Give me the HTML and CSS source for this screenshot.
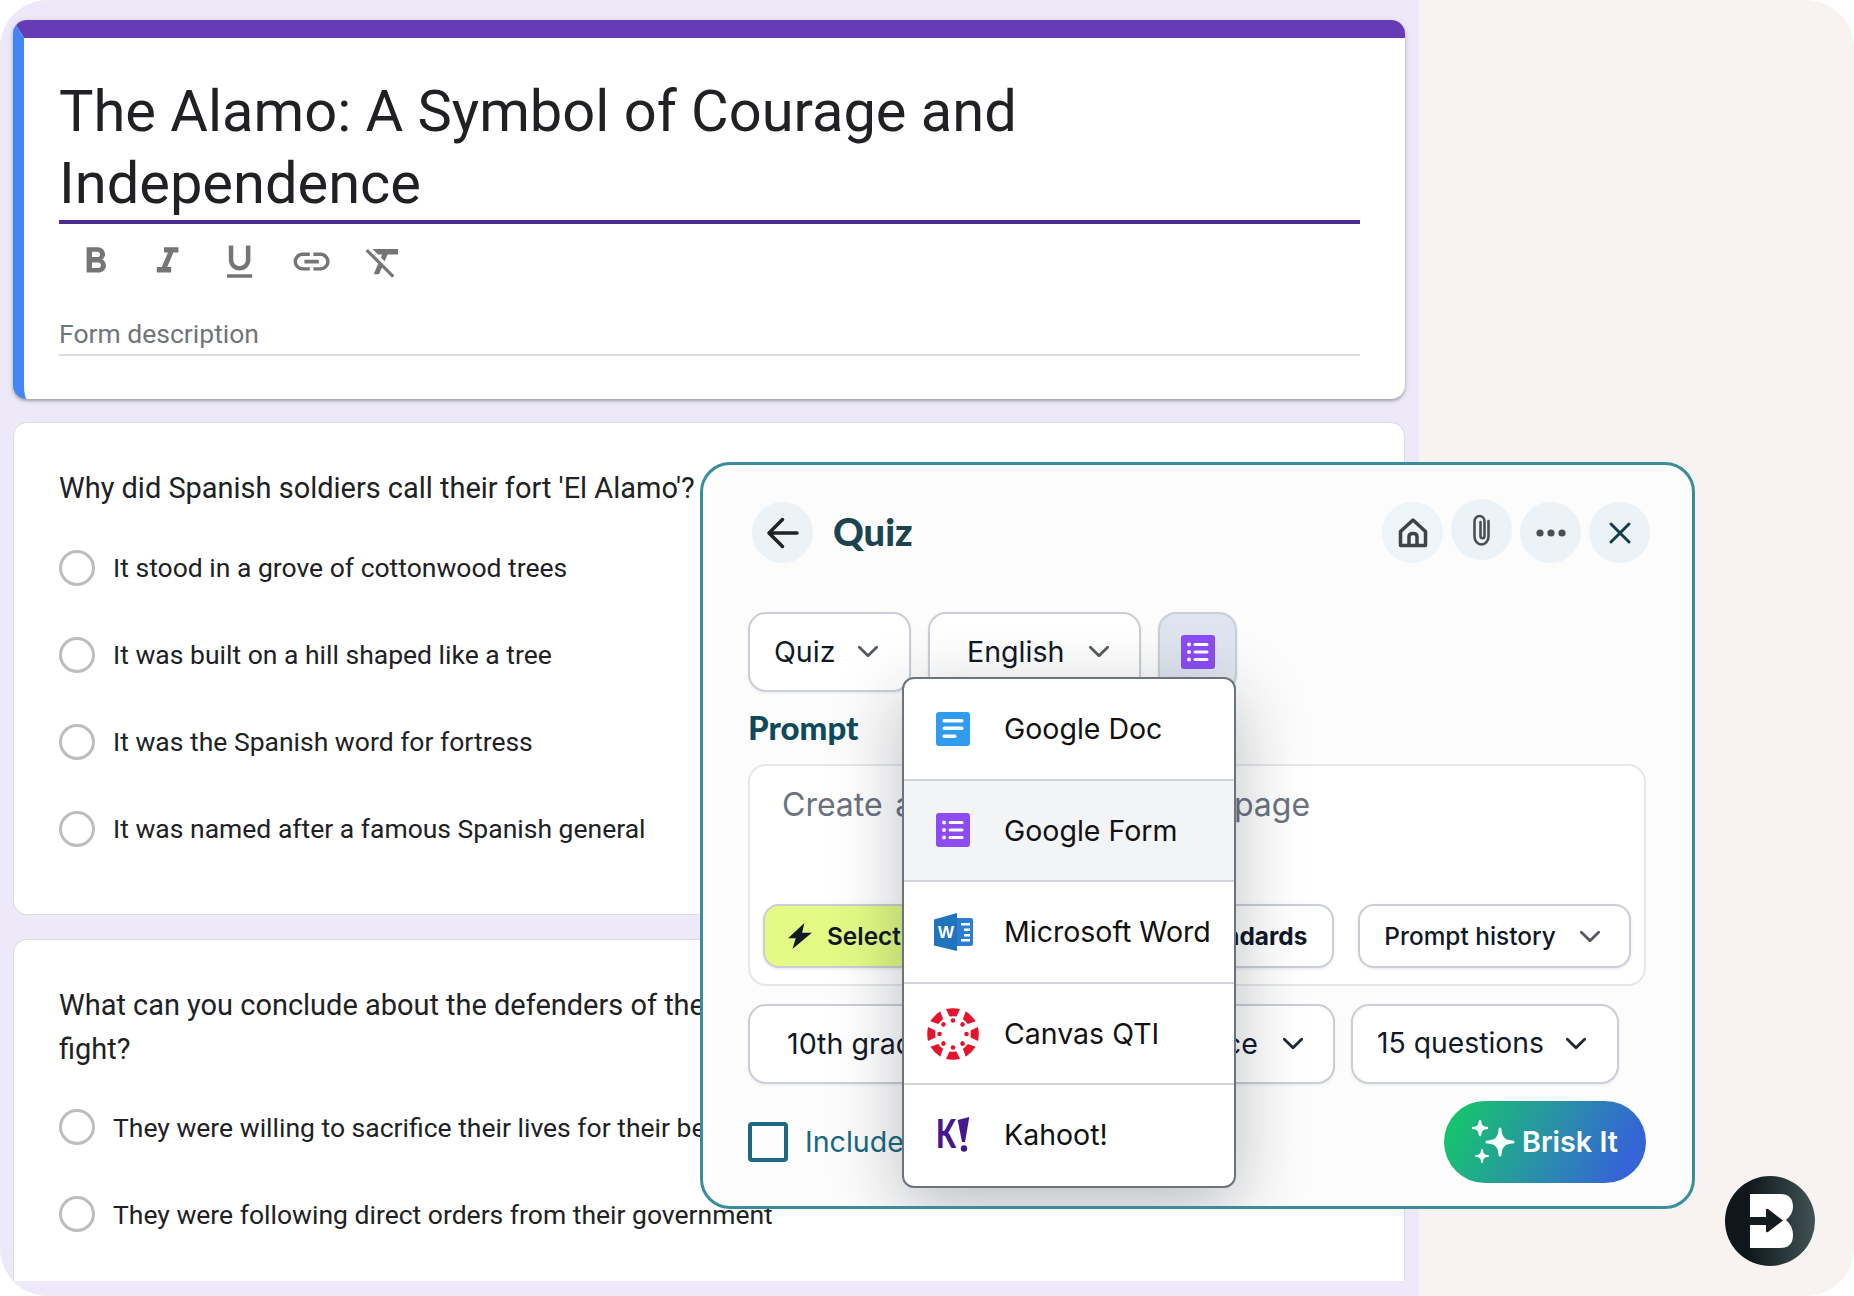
FILE: index.html
```html
<!DOCTYPE html>
<html lang="en">
<head>
<meta charset="utf-8">
<title>The Alamo quiz</title>
<link rel="stylesheet" href="styles.css">
</head>
<body>
<div class="page">
  <main class="forms">
    <section class="card title-card">
      <div class="title-inner">
        <h1 class="form-title">The Alamo: A Symbol of Courage and Independence</h1>
        <div class="toolbar">
          <svg class="tool" viewBox="0 0 24 24"><path d="M15.6 10.79c.97-.67 1.65-1.77 1.65-2.79 0-2.26-1.75-4-4-4H7v14h7.04c2.09 0 3.71-1.7 3.71-3.79 0-1.52-.86-2.82-2.15-3.42zM10 6.5h3c.83 0 1.5.67 1.5 1.5s-.67 1.5-1.5 1.5h-3v-3zm3.5 9H10v-3h3.5c.83 0 1.5.67 1.5 1.5s-.67 1.5-1.5 1.5z"/></svg>
          <svg class="tool" viewBox="0 0 24 24"><path d="M10 4v3h2.21l-3.42 8H6v3h8v-3h-2.21l3.42-8H18V4z"/></svg>
          <svg class="tool" viewBox="0 0 24 24"><path d="M12 17c3.31 0 6-2.69 6-6V3h-2.5v8c0 1.93-1.57 3.5-3.5 3.5S8.5 12.93 8.5 11V3H6v8c0 3.31 2.69 6 6 6zm-7 2v2h14v-2H5z"/></svg>
          <svg class="tool" viewBox="0 0 24 24"><path d="M3.9 12c0-1.71 1.39-3.1 3.1-3.1h4V7H7c-2.76 0-5 2.24-5 5s2.24 5 5 5h4v-1.9H7c-1.71 0-3.1-1.39-3.1-3.1zM8 13h8v-2H8v2zm9-6h-4v1.9h4c1.71 0 3.1 1.39 3.1 3.1s-1.39 3.1-3.1 3.1h-4V17h4c2.76 0 5-2.24 5-5s-2.24-5-5-5z"/></svg>
          <svg class="tool" viewBox="0 0 24 24"><path d="M3.27 5L2 6.27l6.97 6.97L6.5 19h3l1.57-3.66L16.73 21 18 19.73 3.55 5.27 3.27 5zM6 5v.18L8.82 8h2.4l-.72 1.68 2.1 2.1L14.21 8H20V5H6z"/></svg>
        </div>
        <div class="form-desc">Form description</div>
      </div>
    </section>

    <section class="card question q1">
      <p class="q-text">Why did Spanish soldiers call their fort 'El Alamo'?</p>
      <div class="option"><span class="radio"></span>It stood in a grove of cottonwood trees</div>
      <div class="option"><span class="radio"></span>It was built on a hill shaped like a tree</div>
      <div class="option"><span class="radio"></span>It was the Spanish word for fortress</div>
      <div class="option"><span class="radio"></span>It was named after a famous Spanish general</div>
    </section>

    <section class="card question q2">
      <p class="q-text">What can you conclude about the defenders of the Alamo from their choice to stay and<br>fight?</p>
      <div class="option"><span class="radio"></span>They were willing to sacrifice their lives for their beliefs</div>
      <div class="option"><span class="radio"></span>They were following direct orders from their government</div>
    </section>
  </main>
  <aside class="side"></aside>

  <section class="panel">
    <header class="panel-head">
      <button class="round">
        <svg class="ic-back" viewBox="0 0 34 34"><path d="M31 17H3.500M16.500 3.500 3 17l13.500 13.500"/></svg>
      </button>
      <h2 class="panel-title">Quiz</h2>
      <div class="head-actions">
        <button class="round round-home">
          <svg class="ic-home" viewBox="0 0 30 30"><path d="M2.500 27.500V13.500L15 2 27.500 13.500V27.500ZM11 27V18.500Q11 15.500 15 15.500T19 18.500V27"/></svg>
        </button>
        <button class="round round-up">
          <svg class="ic-clip" viewBox="0 0 22 32"><path d="M17.500 7V22.500A7 8 0 0 1 3.500 22.500V7.500A5 5.500 0 0 1 13.500 7.500V22A1.800 2 0 0 1 9.500 22V8"/></svg>
        </button>
        <button class="round">
          <svg class="ic-dots" viewBox="0 0 30 8"><circle cx="4" cy="4" r="3.600"/><circle cx="15" cy="4" r="3.600"/><circle cx="26" cy="4" r="3.600"/></svg>
        </button>
        <button class="round">
          <svg class="ic-x" viewBox="0 0 22 22"><path d="M2 2 20 20M20 2 2 20"/></svg>
        </button>
      </div>
    </header>

    <div class="row selectors">
      <div class="select s-quiz">Quiz<svg class="chev" viewBox="0 0 20 12"><path d="M2 2l8 8 8-8"/></svg></div>
      <div class="select s-lang">English<svg class="chev" viewBox="0 0 20 12"><path d="M2 2l8 8 8-8"/></svg></div>
      <div class="select s-format">
        <svg class="ic-brand" viewBox="0 0 34 34"><rect width="34" height="34" rx="3" fill="#8b4cf6"/><g fill="#fff"><circle cx="8" cy="9.500" r="2"/><circle cx="8" cy="17" r="2"/><circle cx="8" cy="24.500" r="2"/><rect x="12.500" y="8" width="15" height="3" rx="1.500"/><rect x="12.500" y="15.500" width="15" height="3" rx="1.500"/><rect x="12.500" y="23" width="15" height="3" rx="1.500"/></g></svg>
      </div>
    </div>

    <div class="prompt-label">Prompt</div>
    <div class="prompt-box">
      <div class="prompt-text">Create a quiz, based on this page</div>
      <div class="prompt-actions">
        <div class="pill pill-yellow">
          <svg class="ic-bolt" viewBox="0 0 24 26"><path d="M16 1 1 15h7l-3 10 18-15h-9z"/></svg>Select text
        </div>
        <div class="pill pill-std">Standards</div>
        <div class="pill pill-hist">Prompt history<svg class="chev chev-sm" viewBox="0 0 20 12"><path d="M2 2l8 8 8-8"/></svg></div>
      </div>
    </div>

    <div class="row options-row">
      <div class="select s-grade">10th grade</div>
      <div class="select s-type">Multiple choice<svg class="chev chev-dark" viewBox="0 0 20 12"><path d="M2 2l8 8 8-8"/></svg></div>
      <div class="select s-count">15 questions<svg class="chev chev-dark" viewBox="0 0 20 12"><path d="M2 2l8 8 8-8"/></svg></div>
    </div>

    <div class="panel-foot">
      <label class="include"><span class="check"></span><span class="include-text">Include answer key</span></label>
      <button class="brisk-btn">
        <svg class="ic-spark" viewBox="0 0 44 44"><path d="M28 9Q28 22 41 22Q28 22 28 35Q28 22 15 22Q28 22 28 9Z" stroke="#f4fffb" stroke-width="3" stroke-linejoin="round"/><path d="M8 1Q8 8 15 8Q8 8 8 15Q8 8 1 8Q8 8 8 1Z" stroke="#f4fffb" stroke-width="2.500" stroke-linejoin="round"/><path d="M10 30Q10 36 16 36Q10 36 10 42Q10 36 4 36Q10 36 10 30Z" stroke="#f4fffb" stroke-width="2" stroke-linejoin="round"/></svg><span class="brisk-label">Brisk It</span>
      </button>
    </div>

    <div class="menu">
      <div class="menu-item">
        <span class="menu-icon"><svg class="ic-brand" viewBox="0 0 34 34"><rect width="34" height="34" rx="3" fill="#2f9cf0"/><g fill="#fff"><rect x="6.500" y="7" width="21" height="3.400" rx="1.700"/><rect x="6.500" y="14.500" width="21" height="3.400" rx="1.700"/><rect x="6.500" y="22.500" width="14" height="3.400" rx="1.700"/></g></svg></span>Google Doc
      </div>
      <div class="menu-item is-active">
        <span class="menu-icon"><svg class="ic-brand" viewBox="0 0 34 34"><rect width="34" height="34" rx="3" fill="#8b4cf6"/><g fill="#fff"><circle cx="8" cy="9.500" r="2"/><circle cx="8" cy="17" r="2"/><circle cx="8" cy="24.500" r="2"/><rect x="12.500" y="8" width="15" height="3" rx="1.500"/><rect x="12.500" y="15.500" width="15" height="3" rx="1.500"/><rect x="12.500" y="23" width="15" height="3" rx="1.500"/></g></svg></span>Google Form
      </div>
      <div class="menu-item">
        <span class="menu-icon"><svg class="ic-word" viewBox="0 0 39 38"><rect x="18" y="5" width="21" height="28" rx="2" fill="#2b7cd3"/><g fill="#fff"><rect x="27" y="10" width="9" height="2.500"/><rect x="30" y="15.500" width="6" height="2.500"/><rect x="30" y="21" width="6" height="2.500"/><rect x="27" y="26" width="9" height="2.500"/></g><path d="M0 6.500 23 0V38L0 32.500Z" fill="#1f74bd"/><text x="4" y="25" class="word-w">W</text></svg></span>Microsoft Word
      </div>
      <div class="menu-item">
        <span class="menu-icon"><svg class="ic-canvas" viewBox="-26 -26 52 52"><g fill="#e5132b"><g><path d="M-7-25Q0-26.500 7-25L3.500-17.500Q0-18-3.500-17.500Z"/><circle cx="0" cy="-13.500" r="2.300"/></g><g transform="rotate(45)"><path d="M-7-25Q0-26.500 7-25L3.500-17.500Q0-18-3.500-17.500Z"/><circle cx="0" cy="-13.500" r="2.300"/></g><g transform="rotate(90)"><path d="M-7-25Q0-26.500 7-25L3.500-17.500Q0-18-3.500-17.500Z"/><circle cx="0" cy="-13.500" r="2.300"/></g><g transform="rotate(135)"><path d="M-7-25Q0-26.500 7-25L3.500-17.500Q0-18-3.500-17.500Z"/><circle cx="0" cy="-13.500" r="2.300"/></g><g transform="rotate(180)"><path d="M-7-25Q0-26.500 7-25L3.500-17.500Q0-18-3.500-17.500Z"/><circle cx="0" cy="-13.500" r="2.300"/></g><g transform="rotate(225)"><path d="M-7-25Q0-26.500 7-25L3.500-17.500Q0-18-3.500-17.500Z"/><circle cx="0" cy="-13.500" r="2.300"/></g><g transform="rotate(270)"><path d="M-7-25Q0-26.500 7-25L3.500-17.500Q0-18-3.500-17.500Z"/><circle cx="0" cy="-13.500" r="2.300"/></g><g transform="rotate(315)"><path d="M-7-25Q0-26.500 7-25L3.500-17.500Q0-18-3.500-17.500Z"/><circle cx="0" cy="-13.500" r="2.300"/></g></g></svg></span>Canvas QTI
      </div>
      <div class="menu-item">
        <span class="menu-icon"><svg class="ic-kahoot" viewBox="0 0 34 36"><text x="0" y="31" class="kahoot-k" textLength="20" lengthAdjust="spacingAndGlyphs">K</text><path d="M21.700 3 33.300 0 29 25H26Z" fill="#46178f"/><circle cx="28" cy="31.500" r="3.200" fill="#46178f"/></svg></span>Kahoot!
      </div>
    </div>
  </section>

  <svg class="brand" viewBox="0 0 90 90">
    <defs><linearGradient id="bg" x1="0" y1="0" x2="1" y2="0"><stop offset=".25" stop-color="#0f171c"/><stop offset="1" stop-color="#3f5355"/></linearGradient></defs>
    <circle cx="45" cy="45" r="45" fill="url(#bg)"/>
    <path d="M25 18H55Q68 18 68 31Q68 38 61 44Q68 50 68 59Q68 72 55 72H25Z" fill="#fff"/>
    <path d="M25 41H41V34Q41 32 43 33L58 44.500 43 56Q41 57 41 55V49H25Z" fill="#131c21"/>
  </svg>
</div>
</body>
</html>
```

FILE: styles.css
```css
* { box-sizing: border-box; }
html, body { margin: 0; background: #fff; }
.page {
  position: relative;
  display: flex;
  width: 1854px;
  height: 1296px;
  overflow: hidden;
  border-radius: 48px;
  background: #f8f3f0;
}
.forms {
  width: 1419px;
  flex: none;
  padding: 20px 14px 0 13px;
  background: #ede9f8;
  font-family: Roboto, sans-serif;
  color: #202124;
}
.side { flex: 1; }
.card {
  background: #fff;
  border: 1px solid #dadce0;
  border-radius: 14px;
}
.title-card {
  height: 379px;
  border: 0;
  border-top: 18px solid #673ab7;
  border-left: 11px solid #4285f4;
  border-radius: 14px;
  box-shadow: 0 2px 3px rgba(60, 64, 67, .35), 0 1px 6px rgba(60, 64, 67, .15);
}
.title-inner { padding: 0 45px 0 35px; }
.form-title {
  margin: 0;
  padding: 37px 0 0;
  height: 186px;
  border-bottom: 4px solid #4a2a90;
  font-size: 57.8px;
  line-height: 72px;
  font-weight: 400;
  color: #202124;
}
.toolbar { display: flex; gap: 28.8px; padding: 16px 0 0 15px; }
.tool { width: 43.2px; height: 43.2px; fill: #757575; }
.form-desc {
  margin-top: 36px;
  padding-bottom: 5px;
  border-bottom: 2px solid #dadce0;
  font-size: 26.5px;
  line-height: 30px;
  color: #70757a;
}
.question { padding: 0 45px 0 45px; overflow: hidden; }
.q1 { height: 493px; margin-top: 23px; }
.q2 { height: 342px; margin-top: 24px; border-bottom: 0; border-radius: 14px 14px 0 0; }
.q-text {
  margin: 0;
  padding-top: 44px;
  font-size: 28.96px;
  line-height: 43.5px;
  white-space: nowrap;
  color: #202124;
}
.q1 .q-text { margin-bottom: 39px; }
.q2 .q-text { margin-bottom: 38px; }
.option {
  display: flex;
  align-items: center;
  gap: 18px;
  height: 36px;
  margin-bottom: 51px;
  font-size: 26.5px;
  white-space: nowrap;
  color: #202124;
}
.radio {
  flex: none;
  width: 36px;
  height: 36px;
  border: 3.6px solid #bdbdbd;
  border-radius: 50%;
}

.panel {
  position: absolute;
  left: 700px;
  top: 462px;
  width: 995px;
  height: 747px;
  padding: 37px 45px 0;
  overflow: hidden;
  border: 3px solid #3a8d9b;
  border-radius: 30px;
  background: #fcfcfc;
  font-family: Inter, sans-serif;
  color: #111827;
}
.panel-head { display: flex; align-items: center; height: 61px; }
.round {
  display: flex;
  align-items: center;
  justify-content: center;
  flex: none;
  width: 61px;
  height: 61px;
  padding: 0;
  border: 0;
  border-radius: 50%;
  background: #ebf3f9;
}
.panel-head > .round { margin-left: 4px; }
.round-home { background: #edf5f8; }
.round-up { margin-top: -3px; margin-bottom: 3px; }
.panel-title {
  margin: 0 0 0 20px;
  padding-bottom: 4px;
  font-family: Lato, sans-serif;
  font-size: 38px;
  font-weight: 900;
  color: #1b4350;
}
.head-actions { display: flex; gap: 8px; margin-left: auto; margin-right: -3px; }
.ic-back { width: 34px; height: 34px; fill: none; stroke: #222; stroke-width: 3.5; stroke-linecap: round; stroke-linejoin: round; }
.ic-home { width: 30px; height: 30px; fill: none; stroke: #3f4346; stroke-width: 3.5; stroke-linejoin: round; }
.ic-clip { width: 22px; height: 32px; fill: none; stroke: #4b4f52; stroke-width: 2.6; stroke-linecap: round; }
.ic-dots { width: 30px; height: 8px; fill: #4b4f52; }
.ic-x { width: 22px; height: 22px; fill: none; stroke: #133f4d; stroke-width: 3; stroke-linecap: round; }

.row { display: flex; }
.select {
  display: flex;
  align-items: center;
  flex: none;
  height: 80px;
  padding-bottom: 2px;
  border: 2px solid #c9ced8;
  border-radius: 18px;
  background: #fff;
  font-size: 28.6px;
  white-space: nowrap;
  box-shadow: 0 1px 3px rgba(17, 24, 39, .08);
}
.selectors { margin-top: 49px; gap: 17px; }
.s-quiz { width: 163px; padding-left: 24px; gap: 21px; }
.s-lang { width: 213px; padding-left: 37px; gap: 24px; }
.s-format { width: 79px; justify-content: center; padding-bottom: 0; background: #dfe5ee; }
.ic-brand { display: block; width: 34px; height: 34px; }
.chev { flex: none; width: 22px; height: 13px; fill: none; stroke: #555b63; stroke-width: 2.6; stroke-linecap: round; stroke-linejoin: round; }
.chev-dark { stroke: #1f2933; }

.prompt-label {
  height: 72px;
  padding-top: 15px;
  font-family: Lato, sans-serif;
  font-size: 33px;
  line-height: 40px;
  font-weight: 900;
  color: #0f4a5c;
}
.prompt-box {
  display: flex;
  flex-direction: column;
  width: 898px;
  height: 222px;
  padding: 0 13px 16px;
  border: 2px solid #e5e7eb;
  border-radius: 18px;
  background: #fff;
}
.prompt-text {
  flex: 1;
  padding: 19px 19px 0;
  font-size: 32px;
  line-height: 40px;
  word-spacing: 3.5px;
  color: #6b7280;
  white-space: nowrap;
}
.prompt-actions { display: flex; }
.pill {
  display: flex;
  align-items: center;
  height: 64px;
  border: 2px solid #c9ced8;
  border-radius: 16px;
  background: #fff;
  font-size: 24.4px;
  white-space: nowrap;
  box-shadow: 0 1px 3px rgba(17, 24, 39, .1);
}
.pill-yellow {
  width: 300px;
  padding-left: 22px;
  gap: 14px;
  background: #e3fb85;
  font-weight: 600;
}
.pill-std {
  justify-content: flex-end;
  width: 252px;
  margin-left: 20px;
  padding-right: 25px;
  font-weight: 700;
}
.pill-hist {
  width: 273px;
  margin-left: 24px;
  padding-left: 24px;
  gap: 23px;
  font-weight: 500;
}
.ic-bolt { width: 26px; height: 28px; fill: #111827; }

.options-row { margin-top: 18px; }
.s-grade { width: 250px; padding-left: 37px; }
.s-type { width: 318px; margin-left: 19px; padding-left: 33px; gap: 24px; }
.s-count { width: 268px; margin-left: 16px; padding-left: 24px; gap: 21px; font-size: 28.3px; }

.panel-foot {
  display: flex;
  align-items: center;
  justify-content: space-between;
  width: 898px;
  margin-top: 17px;
  height: 82px;
}
.include { display: flex; align-items: center; gap: 17px; font-size: 28.6px; color: #1b6880; }
.include-text { padding-bottom: 2px; }
.check {
  width: 40px;
  height: 40px;
  border: 4px solid #1b6880;
  border-radius: 4px;
}
.brisk-btn {
  display: flex;
  align-items: center;
  justify-content: flex-start;
  gap: 6px;
  width: 202px;
  height: 82px;
  padding: 0 0 0 28px;
  border: 0;
  border-radius: 41px;
  background: linear-gradient(115deg, #17c26f 8%, #2a8fa9 52%, #3464d6 88%);
  color: #fff;
  font-family: Inter, sans-serif;
  font-size: 28.7px;
  font-weight: 600;
}
.brisk-label { padding-bottom: 2px; }
.ic-spark { flex: none; width: 44px; height: 44px; fill: #f4fffb; }

.menu {
  position: absolute;
  left: 199px;
  top: 212px;
  width: 334px;
  height: 511px;
  border: 2px solid #6b7280;
  border-radius: 12px;
  background: #fff;
  box-shadow: 0 20px 70px rgba(17, 24, 39, .28);
  overflow: hidden;
}
.menu-item {
  display: flex;
  align-items: center;
  height: 101.6px;
  border-bottom: 2px solid #d1d5db;
  font-size: 28.5px;
  color: #111;
}
.menu-item:last-child { border-bottom: 0; padding-bottom: 3px; }
.menu-item.is-active { background: #f3f4f6; }
.menu-icon {
  display: flex;
  align-items: center;
  justify-content: center;
  width: 100px;
  padding-right: 2px;
  flex: none;
}
.ic-word { width: 39px; height: 38px; }
.word-w { font-family: "Liberation Sans", sans-serif; font-size: 17px; font-weight: 700; fill: #fff; }
.ic-canvas { width: 52px; height: 52px; }
.ic-kahoot { width: 34px; height: 36px; }
.kahoot-k { font-family: Lato, sans-serif; font-size: 40px; font-weight: 900; fill: #46178f; }

.brand {
  position: absolute;
  left: 1725px;
  top: 1176px;
  width: 90px;
  height: 90px;
}
```
